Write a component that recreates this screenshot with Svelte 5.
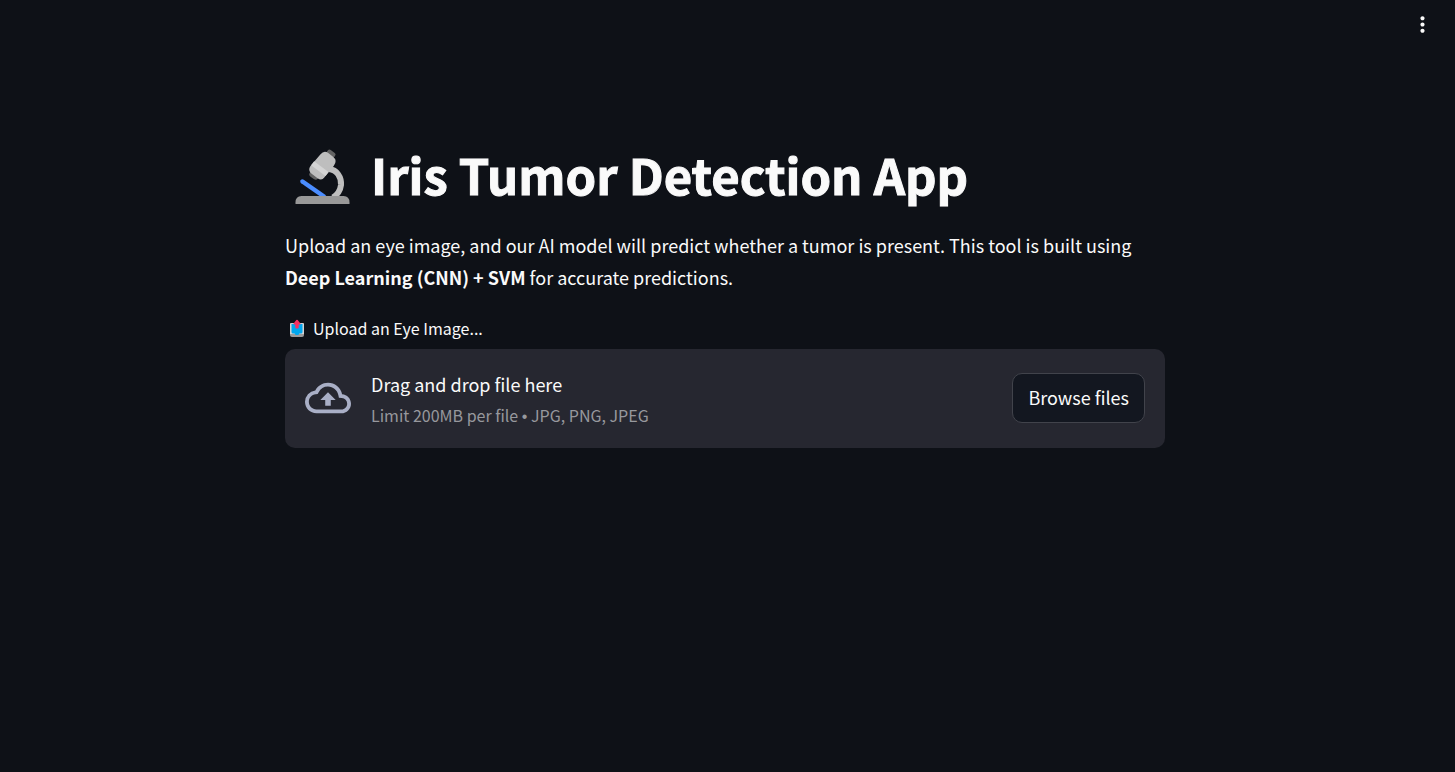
<script>
  let picker;
</script>

<header>
  <button class="menu" aria-label="Main menu">
    <svg viewBox="0 0 24 24" width="25" height="25" fill="currentColor" aria-hidden="true">
      <path d="M12 8c1.100 0 2-.9 2-2s-.9-2-2-2-2 .9-2 2 .9 2 2 2zm0 2c-1.100 0-2 .9-2 2s.9 2 2 2 2-.9 2-2-.9-2-2-2zm0 6c-1.100 0-2 .9-2 2s.9 2 2 2 2-.9 2-2-.9-2-2-2z" />
    </svg>
  </button>
</header>

<main>
  <h1>
    <svg class="microscope" viewBox="0 0 80 75" width="80" height="75" aria-hidden="true">
      <path d="M44 29C52 30 56.500 37 56 45Q55 53 48 57.500" fill="none" stroke="#bebebe" stroke-width="6" />
      <path d="M17.500 41.500L39 56.500" stroke="#4b8dff" stroke-width="4.500" stroke-linecap="round" />
      <path d="M10.500 64v-1.500q0-6.500 6-6.500h42q6 0 6 6.500v1.500z" fill="#989898" />
      <g transform="translate(37.500 25) rotate(37)">
        <rect x="-4.500" y="-17" width="9" height="8" rx="2" fill="#636363" />
        <rect x="-5.500" y="9" width="10" height="7.500" rx="3" fill="#636363" />
        <path d="M-8 -7Q-8 -13 -3 -13H3Q9.500 -13 9.500 -6L9 9Q9 13.500 4 13.500H-3Q-9 13.500 -9 8z" fill="#bebebe" />
        <path d="M-9 2H9V7H-9z" fill="#d4d4d4" />
      </g>
    </svg>
    <span>Iris Tumor Detection App</span>
  </h1>

  <p class="intro">
    Upload an eye image, and our AI model will predict whether a tumor is present. This tool is built using
    <strong>Deep Learning (CNN) + SVM</strong> for accurate predictions.
  </p>

  <label for="eye-image">
    <svg viewBox="0 0 24 24" width="24" height="24" aria-hidden="true">
      <path d="M5 16h14v3q0 2-2 2H7q-2 0-2-2z" fill="#9b9b9b" />
      <path d="M5 8q0-1 1-1h12q1 0 1 1v10H5z" fill="#d3d3d3" />
      <path d="M6.500 8h11v8q0 1.500-1.500 1.500h-1.500l-1.200 1.500h-2.600L9.500 17.500H8q-1.500 0-1.500-1.500z" fill="#00a6ed" />
      <path d="M10.300 11.500V8.500H9q-1.200 0-.4-1l2.700-3.400q.7-.7 1.400 0l2.700 3.400q.8 1-.4 1h-1.300v3q0 1-1 1h-1.400q-1 0-1-1z" fill="#f92f60" />
    </svg>
    <span>Upload an Eye Image...</span>
  </label>

  <section class="dropzone">
    <input bind:this={picker} id="eye-image" type="file" accept=".jpg,.jpeg,.png" hidden />
    <svg class="cloud" viewBox="0 0 24 24" width="46" height="46" fill="currentColor" aria-hidden="true">
      <path d="M19.350 10.040A7.490 7.490 0 0 0 12 4C9.110 4 6.600 5.640 5.350 8.040A5.994 5.994 0 0 0 0 14c0 3.310 2.690 6 6 6h13c2.760 0 5-2.240 5-5 0-2.640-2.050-4.780-4.650-4.960zM19 18H6c-2.210 0-4-1.790-4-4 0-2.050 1.530-3.760 3.560-3.970l1.070-.11.500-.95A5.469 5.469 0 0 1 12 6c2.620 0 4.880 1.860 5.390 4.430l.3 1.500 1.530.11A2.980 2.980 0 0 1 22 15c0 1.650-1.350 3-3 3zM8 13h2.550v3h2.900v-3H16l-4-4-4 4z" />
    </svg>
    <div class="hint">
      <span>Drag and drop file here</span>
      <small>Limit 200MB per file <span class="bullet">•</span> JPG, PNG, JPEG</small>
    </div>
    <button class="browse" onclick={() => picker.click()}>Browse files</button>
  </section>
</main>

<style>
  :global(body) {
    background: #0e1117;
    color: #fafafa;
    font: 18px/32px "Noto Sans CJK SC", sans-serif;
  }

  button {
    font: inherit;
    color: inherit;
    cursor: pointer;
  }

  header {
    display: flex;
    justify-content: flex-end;
    padding: 12px 20px;
  }

  .menu {
    display: flex;
    padding: 0;
    border: 0;
    background: none;
  }

  main {
    box-sizing: border-box;
    max-width: 885px;
    margin: 0 auto;
    padding: 91px 5px 0 0;
  }

  h1 {
    display: flex;
    align-items: flex-start;
    gap: 6px;
    margin: 0 0 14px;
    font-size: 49px;
    font-weight: 700;
    line-height: 68px;
    -webkit-text-stroke: 1px currentColor;
  }

  .microscope {
    flex: none;
  }

  .intro {
    margin: 0 0 20px;
  }

  label {
    display: flex;
    align-items: center;
    gap: 4px;
    margin-bottom: 6px;
    font-size: 16px;
    line-height: 30px;
  }

  .dropzone {
    display: flex;
    align-items: center;
    gap: 20px;
    padding: 19px 20px 20px;
    border-radius: 10px;
    background: #262730;
  }

  .cloud {
    flex: none;
    color: #a9afc6;
  }

  .hint {
    display: flex;
    flex-direction: column;
    flex: 1;
    gap: 2px;
  }

  small {
    font-size: 16px;
    line-height: 26px;
    color: #97989d;
  }

  .bullet {
    font-family: "Liberation Sans", sans-serif;
    line-height: 1;
  }

  .browse {
    height: 50px;
    padding: 0 15px 2px;
    border: 1px solid #41434b;
    border-radius: 10px;
    background: #131720;
    white-space: nowrap;
  }
</style>
